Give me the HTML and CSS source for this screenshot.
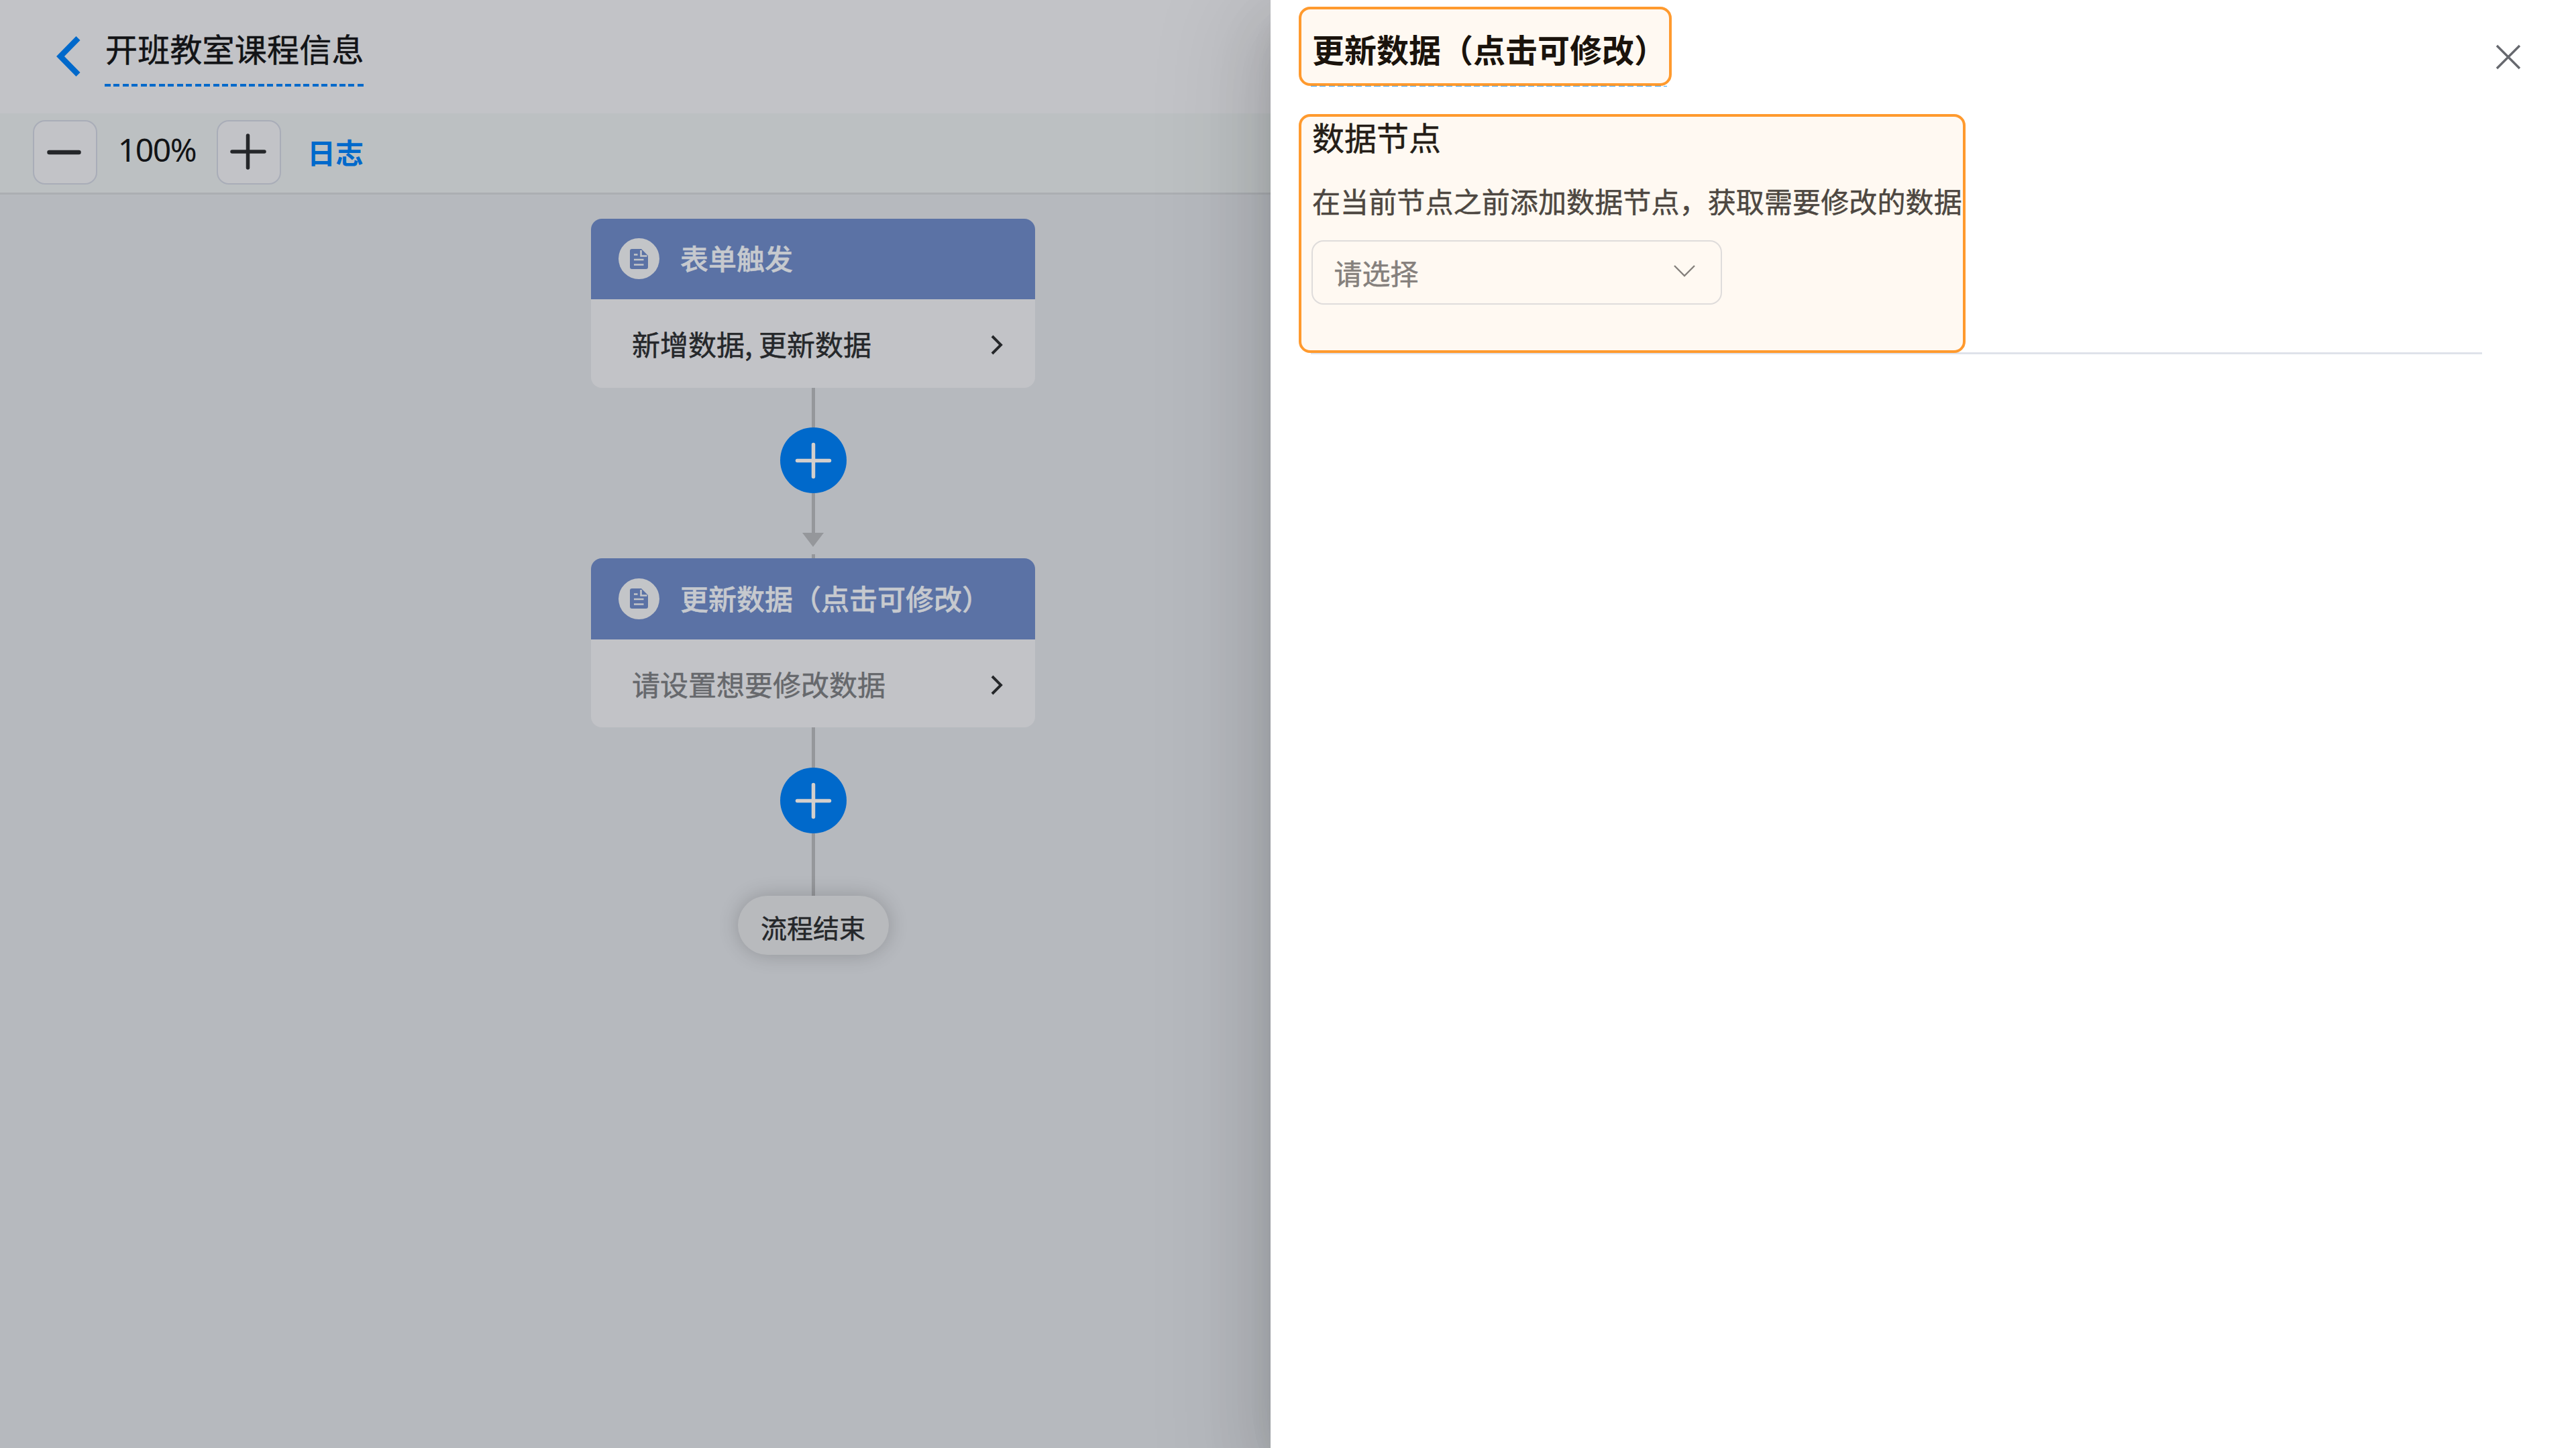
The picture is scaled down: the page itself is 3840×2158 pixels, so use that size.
FILE: index.html
```html
<!DOCTYPE html>
<html lang="zh-CN">
<head>
<meta charset="utf-8">
<title>开班教室课程信息</title>
<link rel="stylesheet" href="styles.css">
</head>
<body>
<div class="app">
  <main class="workspace">
    <header class="header">
      <svg class="back" viewBox="0 0 36 60"><path d="M32.500 3L6 30l26.500 27" fill="none" stroke="currentColor" stroke-width="8.500"/></svg>
      <h1 class="flow-name">开班教室课程信息</h1>
    </header>
    <div class="toolbar">
      <button class="zoom-btn"><svg viewBox="0 0 96 96"><path d="M24.500 48h44" stroke="currentColor" stroke-width="6.500" stroke-linecap="round"/></svg></button>
      <span class="zoom-value">100%</span>
      <button class="zoom-btn"><svg viewBox="0 0 96 96"><path d="M23 47h48M46.500 23v48" stroke="currentColor" stroke-width="5.500" stroke-linecap="round"/></svg></button>
      <a class="log-link">日志</a>
    </div>
    <section class="canvas">
      <div class="flow">
        <article class="node">
          <div class="node-head">
            <span class="node-icon"><svg viewBox="0 0 27 30"><path d="M3 0h14l10 10v17a3 3 0 0 1-3 3H3a3 3 0 0 1-3-3V3a3 3 0 0 1 3-3z" fill="#5b72a5"/><path d="M6 8.500h5.500M6 16h14.500M6 23.500h14.500M16.500 2v8.500h9" fill="none" stroke="#c3c5c8" stroke-width="2.600"/></svg></span>
            <span>表单触发</span>
          </div>
          <div class="node-body">
            <span>新增数据, 更新数据</span>
            <svg class="chevron" viewBox="0 0 18 30"><path d="M2 2l13 13L2 28" fill="none" stroke="currentColor" stroke-width="4"/></svg>
          </div>
        </article>
        <div class="link link-arrow">
          <span class="line line-in"></span>
          <button class="add"><svg viewBox="0 0 98 98"><path d="M25 49.500h48M49 25.500v48" stroke="currentColor" stroke-width="5.500" stroke-linecap="round"/></svg></button>
          <span class="line line-out"></span>
          <svg class="arrow" viewBox="0 0 32 21"><path d="M0 0h32L16 21z" fill="currentColor"/></svg>
          <span class="line line-stub"></span>
        </div>
        <article class="node">
          <div class="node-head">
            <span class="node-icon"><svg viewBox="0 0 27 30"><path d="M3 0h14l10 10v17a3 3 0 0 1-3 3H3a3 3 0 0 1-3-3V3a3 3 0 0 1 3-3z" fill="#5b72a5"/><path d="M6 8.500h5.500M6 16h14.500M6 23.500h14.500M16.500 2v8.500h9" fill="none" stroke="#c3c5c8" stroke-width="2.600"/></svg></span>
            <span>更新数据（点击可修改）</span>
          </div>
          <div class="node-body node-empty">
            <span>请设置想要修改数据</span>
            <svg class="chevron" viewBox="0 0 18 30"><path d="M2 2l13 13L2 28" fill="none" stroke="currentColor" stroke-width="4"/></svg>
          </div>
        </article>
        <div class="link">
          <span class="line line-in"></span>
          <button class="add"><svg viewBox="0 0 98 98"><path d="M25 49.500h48M49 25.500v48" stroke="currentColor" stroke-width="5.500" stroke-linecap="round"/></svg></button>
          <span class="line line-end"></span>
        </div>
        <div class="finish">流程结束</div>
      </div>
    </section>
  </main>
  <aside class="drawer">
    <div class="drawer-head">
      <h2 class="drawer-title">更新数据（点击可修改）</h2>
      <svg class="close" viewBox="0 0 38 38"><path d="M2 2l34 34M36 2L2 36" stroke="currentColor" stroke-width="3.400"/></svg>
    </div>
    <div class="drawer-body">
      <section class="field">
        <h3 class="field-label">数据节点</h3>
        <p class="field-hint">在当前节点之前添加数据节点，获取需要修改的数据</p>
        <div class="select">
          <span>请选择</span>
          <svg class="caret" viewBox="0 0 32 18"><path d="M1 1l15 15L31 1" fill="none" stroke="currentColor" stroke-width="2.400"/></svg>
        </div>
      </section>
    </div>
  </aside>
</div>
</body>
</html>
```
FILE: styles.css
```css
* {
  box-sizing: border-box;
  margin: 0;
  padding: 0;
}

body {
  font-family: "Noto Sans CJK SC", sans-serif;
  font-size: 42px;
  line-height: 60px;
  overflow: hidden;
  -webkit-text-stroke: .5px currentColor;
}

h1, h2, h3 {
  font-size: 48px;
  font-weight: 400;
}

svg {
  display: block;
  flex: none;
}

button {
  border: 0;
  background: none;
  font: inherit;
}

.app {
  display: grid;
  grid-template-columns: 1893.5px 1fr;
  width: 3840px;
  height: 2158px;
}

.workspace {
  display: flex;
  flex-direction: column;
  background: #b6b9be;
}

/* Header */
.header {
  display: flex;
  align-items: flex-start;
  height: 169px;
  padding-left: 84px;
  background: #c2c3c7;
}

.back {
  width: 36px;
  height: 60px;
  margin-top: 54px;
  color: #0069cb;
}

.flow-name {
  height: 129px;
  margin-left: 36px;
  padding: 41px 0 0 1px;
  letter-spacing: .2px;
  color: #121316;
  background: repeating-linear-gradient(90deg, #0069cb 0 9px, transparent 9px 13.460px) 0 100% / 100% 4px no-repeat;
}

/* Toolbar */
.toolbar {
  display: flex;
  align-items: center;
  height: 120.500px;
  padding: 0 0 1px 49px;
  background: #bcc0c2;
  border-bottom: 3px solid #abaeb2;
}

.zoom-btn {
  width: 96px;
  height: 96px;
  border: 2.500px solid #a9adb8;
  border-radius: 18px;
  background: #c2c3c7;
  color: #25272a;
}

.zoom-btn svg {
  width: 96px;
  height: 96px;
  margin: -2px;
}

.zoom-value {
  width: 178px;
  padding-bottom: 8px;
  text-align: center;
  font-family: "Noto Sans", sans-serif;
  font-size: 48px;
  letter-spacing: -1.500px;
  color: #121316;
  -webkit-text-stroke: 0;
}

.log-link {
  margin-left: 39px;
  padding-bottom: 3px;
  font-weight: 700;
  color: #0069cb;
  -webkit-text-stroke: 0;
}

/* Flow canvas */
.canvas {
  flex: 1;
  padding: 36px 0 0 881px;
}

.flow {
  display: flex;
  flex-direction: column;
  align-items: center;
  width: 662px;
}

.node {
  width: 662px;
  height: 252px;
  border-radius: 16px;
  overflow: hidden;
  background: #c2c3c7;
}

.node-head {
  display: flex;
  align-items: center;
  gap: 31px;
  height: 120.500px;
  padding-left: 41px;
  background: #5b72a5;
  color: #c6c9ce;
  font-weight: 500;
}

.node-head > span:last-child {
  padding-bottom: 3px;
}

.node-icon {
  display: grid;
  place-items: center;
  width: 61px;
  height: 61px;
  border-radius: 50%;
  background: #c3c5c8;
}

.node-icon svg {
  width: 27px;
  height: 30px;
}

.node-body {
  display: flex;
  align-items: center;
  justify-content: space-between;
  height: 131.500px;
  padding: 5px 48px 0 61px;
  color: #25272a;
}

.node-body > span {
  padding-bottom: 4px;
}

.node-empty {
  color: #66686c;
}

.chevron {
  width: 18px;
  height: 30px;
  color: #25272a;
}

.link {
  display: flex;
  flex-direction: column;
  align-items: center;
  color: #95979b;
}

.link-arrow {
  height: 254.500px;
}

.line {
  width: 5px;
  background: #95979b;
}

.line-in {
  height: 59.500px;
}

.line-out {
  height: 59.500px;
}

.line-stub {
  height: 6px;
  margin-top: 11px;
}

.line-end {
  height: 93.500px;
}

.arrow {
  width: 32px;
  height: 21px;
}

.add {
  width: 99px;
  height: 98px;
  border-radius: 50%;
  background: #0069cb;
  color: #d3cfcc;
}

.add svg {
  width: 99px;
  height: 98px;
}

.finish {
  width: 225px;
  height: 88px;
  padding-top: 16px;
  border-radius: 44px;
  background: #b8babd;
  box-shadow: 0 0 30px rgba(0, 0, 0, .2);
  text-align: center;
  font-size: 39px;
  color: #25272a;
}

/* Drawer */
.drawer {
  position: relative;
  background: #fff;
  box-shadow: 0 48px 144px 48px rgba(0, 0, 0, .08), 0 36px 96px rgba(0, 0, 0, .12), 0 24px 48px -24px rgba(0, 0, 0, .16);
}

.drawer-head {
  display: flex;
  align-items: flex-start;
  justify-content: space-between;
  height: 170px;
  padding: 10px 82px 0 42.500px;
}

.drawer-title {
  position: relative;
  width: 556px;
  height: 118px;
  padding: 28px 0 0 16px;
  border: 4px solid #ff9a2e;
  border-radius: 17px;
  background: #fff9f2;
  color: #1a130c;
  font-weight: 700;
  white-space: nowrap;
  -webkit-text-stroke: 0;
}

/* Dashed rule showing just under the highlighted title */
.drawer-title::after {
  content: "";
  position: absolute;
  left: 14px;
  right: 3px;
  bottom: -5px;
  height: 1.500px;
  background: repeating-linear-gradient(90deg, #3fa4f5 0 9px, transparent 9px 13.500px);
}

.close {
  width: 38px;
  height: 38px;
  margin-top: 56px;
  color: #66686e;
}

.drawer-body {
  display: flow-root;
  height: 358px;
  margin: 0 140px 0 60.500px;
  border-bottom: 3px solid #dfe2ea;
}

.field {
  width: 994px;
  height: 356px;
  margin-left: -18px;
  padding: 0 14.500px;
  border: 4px solid #ff9a2e;
  border-radius: 17px;
  background: #fff9f2;
  white-space: nowrap;
}

.field-label {
  margin-top: -1px;
  padding: 0 1.500px;
  color: #241d17;
}

.field-hint {
  margin-top: 36px;
  padding-left: 1.500px;
  letter-spacing: .12px;
  color: #4d4741;
}

.select {
  display: flex;
  align-items: center;
  justify-content: space-between;
  width: 612px;
  height: 96px;
  margin-top: 29px;
  padding: 0 38px 0 32px;
  border: 2.500px solid #dfdcdb;
  border-radius: 18px;
  color: #85807c;
}

.caret {
  width: 32px;
  height: 18px;
  margin-top: -4px;
}
```
